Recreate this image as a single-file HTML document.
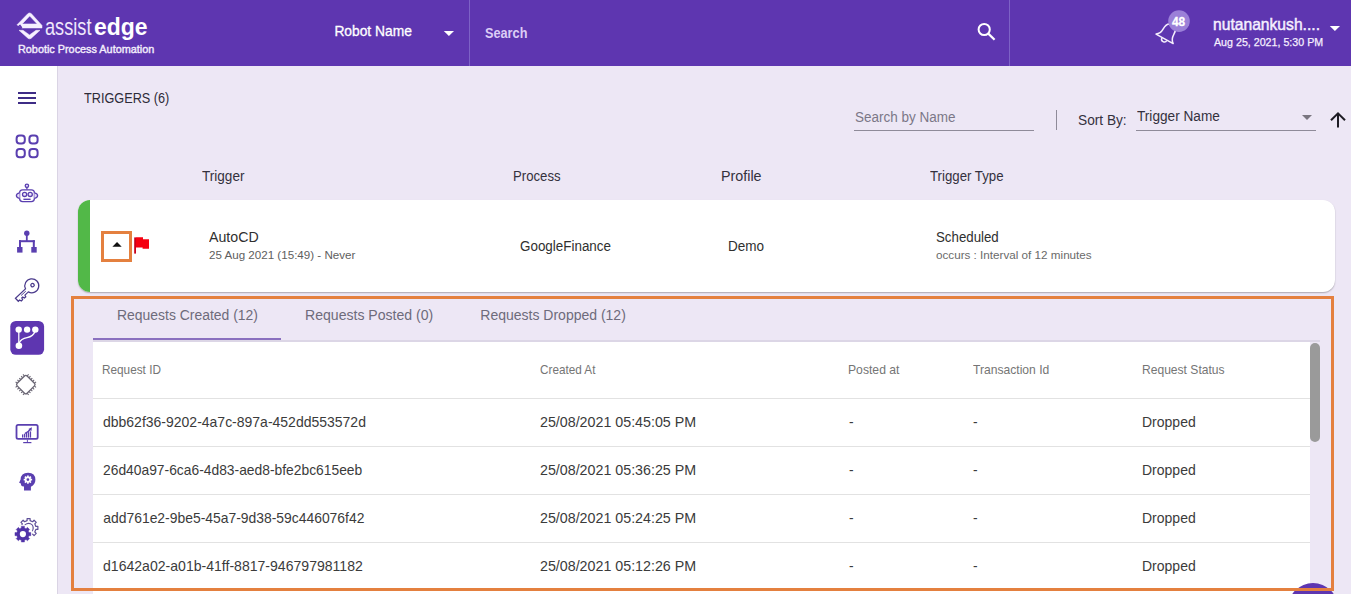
<!DOCTYPE html>
<html><head><meta charset="utf-8"><title>Triggers</title>
<style>
html,body{margin:0;padding:0;}
body{width:1351px;height:594px;overflow:hidden;position:relative;background:#ede7f5;font-family:"Liberation Sans",sans-serif;}
.a{position:absolute;}
.t{position:absolute;white-space:nowrap;transform-origin:0 0;}
svg{position:absolute;overflow:visible;}
</style></head><body>
<!-- header -->
<div class="a" style="left:0;top:0;width:1351px;height:66px;background:#5e36b0;"></div>
<div class="a" style="left:469px;top:0;width:1px;height:66px;background:#7d62c6;"></div>
<div class="a" style="left:1009px;top:0;width:1px;height:66px;background:#7d62c6;"></div>
<!-- logo icon -->
<svg style="left:0;top:0" width="60" height="60">
  <path fill-rule="evenodd" fill="#f6f0ff" stroke="#f6f0ff" stroke-width="0.5" stroke-linejoin="round" d="M16.9 24.9 L28 13.5 Q29.6 12.3 31.2 13.5 L42 25.4 L42 28 L21.6 28 L20.3 26.2 Z M22.2 23.9 L37.2 23.9 L29.7 16 Z"/>
  <path fill="#5e36b0" d="M18.6 25.2 L20.2 24.5 L22.4 27.6 L21 28.4 Z"/>
  <path fill="#f6f0ff" stroke="#f6f0ff" stroke-width="0.5" stroke-linejoin="round" d="M19 30.3 L28.2 38.4 Q29.6 39.3 31 38.4 L40 30.3 L36 30.3 L29.5 34.9 L23 30.3 Z"/>
</svg>
<!-- robot dropdown -->
<svg style="left:0;top:0" width="10" height="10"><path d="M443.8 31 L454 31 L448.9 36 Z" fill="#fff"/></svg>
<!-- search icon -->
<svg style="left:0;top:0" width="10" height="10">
  <circle cx="984.2" cy="29.5" r="5.6" fill="none" stroke="#fff" stroke-width="2"/>
  <path d="M988.3 33.6 L994.6 39.8" stroke="#fff" stroke-width="2.2" stroke-linecap="butt"/>
</svg>
<!-- bell -->
<svg style="left:0;top:0" width="10" height="10">
  <g transform="translate(1164.6,38.8) rotate(29)" fill="none" stroke="#f4eefc" stroke-width="1.5" stroke-linejoin="round">
    <path d="M-9.8 0 Q-6 -2.5 -6 -8 Q-6 -16 0 -16 Q6 -16 6 -8 Q6 -2.5 9.8 0 Z"/>
    <path d="M-2.8 0.4 A2.8 2.8 0 0 0 2.8 0.4"/>
  </g>
  <circle cx="1179" cy="21.1" r="10.8" fill="#9b80d8"/>
</svg>
<!-- user dropdown -->
<svg style="left:0;top:0" width="10" height="10"><path d="M1329.8 26 L1340 26 L1334.9 31 Z" fill="#fff"/></svg>

<!-- sidebar -->
<div class="a" style="left:0;top:66px;width:57px;height:528px;background:#ffffff;"></div>
<div class="a" style="left:57px;top:66px;width:1px;height:528px;background:#dad4e4;"></div>
<svg style="left:0;top:0" width="10" height="10">
  <!-- hamburger -->
  <g fill="#3e2c86"><rect x="18" y="92" width="18" height="2"/><rect x="18" y="97" width="18" height="2"/><rect x="18" y="102" width="18" height="2"/></g>
  <!-- grid -->
  <g fill="none" stroke="#5a3fb0" stroke-width="2">
    <rect x="16.6" y="135.4" width="8.2" height="8.2" rx="3"/>
    <rect x="29.4" y="135.4" width="8.2" height="8.2" rx="3"/>
    <rect x="16.6" y="149.1" width="8.2" height="8.2" rx="3"/>
    <rect x="29.4" y="149.1" width="8.2" height="8.2" rx="3"/>
  </g>
  <!-- robot -->
  <g fill="none" stroke="#5a3fb0" stroke-width="1.3">
    <circle cx="26.9" cy="185.8" r="1.7" fill="#e6def7"/>
    <path d="M26.9 187.5 V189.6"/>
    <rect x="19.6" y="189.8" width="14.8" height="11.8" rx="3"/>
    <path d="M19.6 192.8 Q16.4 193.3 16.4 195.6 Q16.4 197.9 19.6 198.4" fill="#e6def7"/>
    <path d="M34.4 192.8 Q37.6 193.3 37.6 195.6 Q37.6 197.9 34.4 198.4" fill="#e6def7"/>
    <circle cx="24.6" cy="194.4" r="2.1" fill="#ece6f8"/>
    <circle cx="30.2" cy="194.4" r="2.1" fill="#ece6f8"/>
    <path d="M23.4 199.3 H30.6" stroke-width="1.4"/>
  </g>
  <!-- hierarchy -->
  <g fill="#5a3fb0">
    <circle cx="26.8" cy="233.3" r="2.7"/>
    <rect x="25.9" y="233" width="1.8" height="8"/>
    <rect x="19" y="240.2" width="15.8" height="2"/>
    <rect x="19" y="240.2" width="2" height="7"/>
    <rect x="32.8" y="240.2" width="2" height="7"/>
    <rect x="17.1" y="247" width="5.4" height="5.6"/>
    <rect x="31.3" y="247" width="5.4" height="5.6"/>
  </g>
  <!-- key -->
  <g transform="translate(31.8,285.8) rotate(47)" fill="none" stroke="#4a3a8c" stroke-width="1.25" stroke-linejoin="miter">
    <path d="M-2.1 6.7 L-2.1 20.4 L2.1 20.4 L2.1 18.6 L3.9 18 L3.9 16.2 L2.1 15.6 L2.1 14.3 L3.9 13.7 L3.9 11.9 L2.1 11.3 L2.1 6.7 A7 7 0 1 0 -2.1 6.7 Z"/>
    <circle cx="0" cy="-1" r="1.7"/>
    <path d="M-0.2 8 V14.5" stroke-width="0.9"/>
  </g>
  <!-- active -->
  <rect x="10.3" y="321" width="33.8" height="33.8" rx="5.5" fill="#5e36b0"/>
  <g fill="#fff">
    <circle cx="18.7" cy="329.6" r="3.2"/><circle cx="27.1" cy="329.6" r="3.2"/><circle cx="35.3" cy="329.6" r="3.2"/>
    <circle cx="18.9" cy="345.8" r="3.3"/>
  </g>
  <g fill="none" stroke="#fff" stroke-width="1.25">
    <path d="M18.8 330 V345"/>
    <path d="M35.3 330.5 Q33.5 336.5 27 337.6 Q21 338.5 19.2 343"/>
  </g>
  <!-- chip -->
  <g transform="translate(25.8,384.6) rotate(45)">
    <rect x="-7" y="-7" width="14" height="14" rx="1.8" fill="none" stroke="#6a6674" stroke-width="1.3"/>
    <path d="M-5.2 -9.2 V-7.2 M-5.2 9.2 V7.2 M-9.2 -5.2 H-7.2 M9.2 -5.2 H7.2 M-2.6 -9.2 V-7.2 M-2.6 9.2 V7.2 M-9.2 -2.6 H-7.2 M9.2 -2.6 H7.2 M0 -9.2 V-7.2 M0 9.2 V7.2 M-9.2 0 H-7.2 M9.2 0 H7.2 M2.6 -9.2 V-7.2 M2.6 9.2 V7.2 M-9.2 2.6 H-7.2 M9.2 2.6 H7.2 M5.2 -9.2 V-7.2 M5.2 9.2 V7.2 M-9.2 5.2 H-7.2 M9.2 5.2 H7.2" stroke="#6a6674" stroke-width="1.1"/>
  </g>
  <!-- monitor -->
  <g>
    <rect x="16.5" y="424.9" width="21.2" height="13.9" rx="1.6" fill="none" stroke="#5a3fb0" stroke-width="1.8"/>
    <path d="M27.4 439.6 V442.2" stroke="#5a3fb0" stroke-width="0.9"/>
    <rect x="23.2" y="442" width="8.2" height="1.2" fill="#5a3fb0"/>
    <g fill="#5a3fb0"><rect x="22.00" y="434.40" width="1.3" height="3.20"/><rect x="23.95" y="433.65" width="1.3" height="3.95"/><rect x="25.90" y="432.90" width="1.3" height="4.70"/><rect x="27.85" y="432.15" width="1.3" height="5.45"/><rect x="29.80" y="431.40" width="1.3" height="6.20"/></g>
    <path d="M25 433.4 Q28.6 432.2 30.1 429.4" fill="none" stroke="#5a3fb0" stroke-width="1.5"/>
    <path d="M28.4 428.9 L31.9 427.2 L31.4 431 Z" fill="#5a3fb0"/>
  </g>
  <!-- head -->
  <g>
    <path d="M24 490.6 V486.6 Q21.8 486.6 21.1 485.3 L20.9 483.6 L19.1 482.8 L20.6 479.6 Q20.8 472.9 28.1 472.8 Q35.4 473 35.4 479.8 Q35.4 484.3 30.9 486.8 V490.6 Z" fill="#5a3fb0"/>
    <path fill="#fff" fill-rule="evenodd" d="M31.00 478.79 L32.12 478.76 L32.12 480.44 L31.00 480.41 L30.66 481.22 L31.48 481.99 L30.29 483.18 L29.52 482.36 L28.71 482.70 L28.74 483.82 L27.06 483.82 L27.09 482.70 L26.28 482.36 L25.51 483.18 L24.32 481.99 L25.14 481.22 L24.80 480.41 L23.68 480.44 L23.68 478.76 L24.80 478.79 L25.14 477.98 L24.32 477.21 L25.51 476.02 L26.28 476.84 L27.09 476.50 L27.06 475.38 L28.74 475.38 L28.71 476.50 L29.52 476.84 L30.29 476.02 L31.48 477.21 L30.66 477.98 Z M29.3 479.6 A1.4 1.4 0 1 0 26.5 479.6 A1.4 1.4 0 1 0 29.3 479.6 Z"/>
  </g>
  <!-- gears -->
  <g>
    <path d="M27.10 520.65 L27.06 518.63 L30.14 518.63 L30.10 520.65 L32.66 521.72 L34.07 520.25 L36.25 522.43 L34.78 523.84 L35.85 526.40 L37.87 526.36 L37.87 529.44 L35.85 529.40 L34.78 531.96 L36.25 533.37 L34.07 535.55 L32.66 534.08 L30.10 535.15 L30.14 537.17 L27.06 537.17 L27.10 535.15 L24.54 534.08 L23.13 535.55 L20.95 533.37 L22.42 531.96 L21.35 529.40 L19.33 529.44 L19.33 526.36 L21.35 526.40 L22.42 523.84 L20.95 522.43 L23.13 520.25 L24.54 521.72 Z" fill="#fff" stroke="#5e4f98" stroke-width="1.2" stroke-linejoin="round"/>
    <circle cx="28.6" cy="527.9" r="4.6" fill="none" stroke="#5e4f98" stroke-width="1.2"/>
    <circle cx="22.9" cy="534.1" r="9.4" fill="#fff"/>
    <path d="M29.00 532.51 L30.84 532.52 L30.84 535.68 L29.00 535.69 L28.34 537.29 L29.63 538.60 L27.40 540.83 L26.09 539.54 L24.49 540.20 L24.48 542.04 L21.32 542.04 L21.31 540.20 L19.71 539.54 L18.40 540.83 L16.17 538.60 L17.46 537.29 L16.80 535.69 L14.96 535.68 L14.96 532.52 L16.80 532.51 L17.46 530.91 L16.17 529.60 L18.40 527.37 L19.71 528.66 L21.31 528.00 L21.32 526.16 L24.48 526.16 L24.49 528.00 L26.09 528.66 L27.40 527.37 L29.63 529.60 L28.34 530.91 Z" fill="#5032a8" stroke="#5032a8" stroke-width="0.4" stroke-linejoin="round"/>
    <circle cx="22.9" cy="534.1" r="3.1" fill="#fff"/>
  </g>
</svg>

<!-- toolbar -->
<div class="a" style="left:854px;top:130px;width:180px;height:1px;background:#8f8b99;"></div>
<div class="a" style="left:1056px;top:110px;width:1px;height:20px;background:#8f8b99;"></div>
<div class="a" style="left:1136px;top:130px;width:180px;height:1px;background:#8f8b99;"></div>
<svg style="left:0;top:0" width="10" height="10">
  <path d="M1302 115 L1312 115 L1307 120 Z" fill="#7a7680"/>
  <path d="M1338 127.5 V113.8 M1331 120.3 L1338 113.3 L1345 120.3" fill="none" stroke="#1e1c24" stroke-width="2"/>
</svg>

<!-- card -->
<div class="a" style="left:78px;top:200px;width:1257px;height:92px;background:#fff;border-radius:12px;box-shadow:0 1px 1.5px rgba(0,0,0,0.28);overflow:hidden;">
  <div class="a" style="left:0;top:0;width:12px;height:92px;background:#52b848;"></div>
</div>
<div class="a" style="left:101px;top:231px;width:25px;height:25px;border:3px solid #e4803f;"></div>
<svg style="left:0;top:0" width="10" height="10">
  <path d="M112.4 246.8 L121.7 246.8 L117.05 242 Z" fill="#111"/>
  <rect x="134.2" y="237.4" width="1.8" height="16.2" fill="#c8001a"/>
  <path d="M136 237.3 H143 V239.3 H149 V248.7 H142.6 V247.6 H136 Z" fill="#f50010"/>
</svg>

<!-- requests panel -->
<div class="a" style="left:93px;top:340px;width:1227px;height:2px;background:#dcd6e6;"></div>
<div class="a" style="left:93px;top:338px;width:188px;height:2px;background:#8a70bf;"></div>
<div class="a" style="left:93px;top:342px;width:1217px;height:252px;background:#fff;"></div>
<div class="a" style="left:93px;top:398px;width:1217px;height:1px;background:#e2e2e2;"></div>
<div class="a" style="left:93px;top:446px;width:1217px;height:1px;background:#e2e2e2;"></div>
<div class="a" style="left:93px;top:494px;width:1217px;height:1px;background:#e2e2e2;"></div>
<div class="a" style="left:93px;top:542px;width:1217px;height:1px;background:#e2e2e2;"></div>
<div class="a" style="left:1310px;top:343px;width:10px;height:99px;background:#9a9a9a;border-radius:5px;"></div>
<div class="a" style="left:1288px;top:583px;width:50px;height:50px;background:#5e36b0;border-radius:50%;"></div>
<div class="a" style="left:71px;top:296px;width:1257px;height:289px;border:3px solid #e4803f;"></div>

<div class="t" style="left:45.23px;top:16px;font-size:23.6px;line-height:23.6px;font-weight:400;color:#efe8fb;transform:scaleX(0.7698);">assist</div>
<div class="t" style="left:94.00px;top:15px;font-size:24.4px;line-height:24.4px;font-weight:700;color:#ffffff;transform:scaleX(0.9403);">edge</div>
<div class="t" style="left:17.60px;top:44px;font-size:11.4px;line-height:11.4px;font-weight:400;color:#f4eefc;transform:scaleX(0.9520);-webkit-text-stroke:0.4px #f4eefc;">Robotic Process Automation</div>
<div class="t" style="left:334.40px;top:25px;font-size:13.8px;line-height:13.8px;font-weight:400;color:#ffffff;-webkit-text-stroke:0.3px #fff;">Robot Name</div>
<div class="t" style="left:485.40px;top:27px;font-size:13.8px;line-height:13.8px;font-weight:700;color:#dccdf6;transform:scaleX(0.9212);">Search</div>
<div class="t" style="left:1212.85px;top:16px;font-size:16.4px;line-height:16.4px;font-weight:400;color:#f6f0ff;transform:scaleX(0.9545);-webkit-text-stroke:0.45px #f6f0ff;">nutanankush....</div>
<div class="t" style="left:1213.50px;top:37px;font-size:11px;line-height:11px;font-weight:400;color:#f6f0ff;transform:scaleX(0.9701);-webkit-text-stroke:0.25px #f6f0ff;">Aug 25, 2021, 5:30 PM</div>
<div class="t" style="left:1172.30px;top:16px;font-size:12.4px;line-height:12.4px;font-weight:700;color:#ffffff;transform:scaleX(0.9574);-webkit-text-stroke:0.3px #fff;">48</div>
<div class="t" style="left:83.50px;top:91px;font-size:14px;line-height:14px;font-weight:400;color:#2d2b38;transform:scaleX(0.9063);">TRIGGERS (6)</div>
<div class="t" style="left:854.60px;top:111px;font-size:13.8px;line-height:13.8px;font-weight:400;color:#7b7787;transform:scaleX(0.9779);">Search by Name</div>
<div class="t" style="left:1077.90px;top:113px;font-size:14px;line-height:14px;font-weight:400;color:#34313d;transform:scaleX(0.9774);">Sort By:</div>
<div class="t" style="left:1137.00px;top:110px;font-size:13.8px;line-height:13.8px;font-weight:400;color:#34313d;transform:scaleX(0.9887);">Trigger Name</div>
<div class="t" style="left:202.20px;top:169px;font-size:14px;line-height:14px;font-weight:400;color:#34313d;transform:scaleX(0.9691);">Trigger</div>
<div class="t" style="left:513.26px;top:169px;font-size:14px;line-height:14px;font-weight:400;color:#34313d;transform:scaleX(0.9400);">Process</div>
<div class="t" style="left:720.98px;top:169px;font-size:14px;line-height:14px;font-weight:400;color:#34313d;transform:scaleX(1.0207);">Profile</div>
<div class="t" style="left:930.00px;top:169px;font-size:14px;line-height:14px;font-weight:400;color:#34313d;transform:scaleX(0.9453);">Trigger Type</div>
<div class="t" style="left:209.40px;top:230px;font-size:14px;line-height:14px;font-weight:400;color:#2f2f2f;transform:scaleX(1.0121);">AutoCD</div>
<div class="t" style="left:209.40px;top:250px;font-size:11.4px;line-height:11.4px;font-weight:400;color:#5e5e5e;transform:scaleX(1.0182);">25 Aug 2021 (15:49) - Never</div>
<div class="t" style="left:520.40px;top:239px;font-size:14px;line-height:14px;font-weight:400;color:#2f2f2f;transform:scaleX(0.9583);">GoogleFinance</div>
<div class="t" style="left:727.63px;top:239px;font-size:14px;line-height:14px;font-weight:400;color:#2f2f2f;transform:scaleX(0.9656);">Demo</div>
<div class="t" style="left:935.70px;top:230px;font-size:14px;line-height:14px;font-weight:400;color:#2f2f2f;transform:scaleX(0.9483);">Scheduled</div>
<div class="t" style="left:935.70px;top:250px;font-size:11.4px;line-height:11.4px;font-weight:400;color:#6a6a6a;transform:scaleX(1.0246);">occurs : Interval of 12 minutes</div>
<div class="t" style="left:116.60px;top:308px;font-size:14px;line-height:14px;font-weight:400;color:#6e6b7b;transform:scaleX(0.9952);">Requests Created (12)</div>
<div class="t" style="left:304.99px;top:308px;font-size:14px;line-height:14px;font-weight:400;color:#6e6b7b;transform:scaleX(1.0051);">Requests Posted (0)</div>
<div class="t" style="left:480.30px;top:308px;font-size:14px;line-height:14px;font-weight:400;color:#6e6b7b;">Requests Dropped (12)</div>
<div class="t" style="left:102.35px;top:364px;font-size:12.4px;line-height:12.4px;font-weight:400;color:#757575;transform:scaleX(0.9503);">Request ID</div>
<div class="t" style="left:540.40px;top:364px;font-size:12.4px;line-height:12.4px;font-weight:400;color:#757575;transform:scaleX(0.9467);">Created At</div>
<div class="t" style="left:847.92px;top:364px;font-size:12.4px;line-height:12.4px;font-weight:400;color:#757575;transform:scaleX(0.9825);">Posted at</div>
<div class="t" style="left:973.20px;top:364px;font-size:12.4px;line-height:12.4px;font-weight:400;color:#757575;transform:scaleX(0.9775);">Transaction Id</div>
<div class="t" style="left:1141.63px;top:364px;font-size:12.4px;line-height:12.4px;font-weight:400;color:#757575;transform:scaleX(0.9746);">Request Status</div>
<div class="t" style="left:103.30px;top:416px;font-size:13.9px;line-height:13.9px;font-weight:400;color:#3b3b3b;transform:scaleX(1.0071);">dbb62f36-9202-4a7c-897a-452dd553572d</div>
<div class="t" style="left:540.40px;top:416px;font-size:13.9px;line-height:13.9px;font-weight:400;color:#3b3b3b;transform:scaleX(1.0259);">25/08/2021 05:45:05 PM</div>
<div class="t" style="left:849.00px;top:416px;font-size:13.8px;line-height:13.8px;font-weight:400;color:#3b3b3b;">-</div>
<div class="t" style="left:973.00px;top:416px;font-size:13.8px;line-height:13.8px;font-weight:400;color:#3b3b3b;">-</div>
<div class="t" style="left:1141.59px;top:416px;font-size:13.8px;line-height:13.8px;font-weight:400;color:#3b3b3b;transform:scaleX(1.0146);">Dropped</div>
<div class="t" style="left:103.30px;top:464px;font-size:13.9px;line-height:13.9px;font-weight:400;color:#3b3b3b;transform:scaleX(0.9959);">26d40a97-6ca6-4d83-aed8-bfe2bc615eeb</div>
<div class="t" style="left:540.40px;top:464px;font-size:13.9px;line-height:13.9px;font-weight:400;color:#3b3b3b;transform:scaleX(1.0259);">25/08/2021 05:36:25 PM</div>
<div class="t" style="left:849.00px;top:464px;font-size:13.8px;line-height:13.8px;font-weight:400;color:#3b3b3b;">-</div>
<div class="t" style="left:973.00px;top:464px;font-size:13.8px;line-height:13.8px;font-weight:400;color:#3b3b3b;">-</div>
<div class="t" style="left:1141.59px;top:464px;font-size:13.8px;line-height:13.8px;font-weight:400;color:#3b3b3b;transform:scaleX(1.0146);">Dropped</div>
<div class="t" style="left:103.30px;top:512px;font-size:13.9px;line-height:13.9px;font-weight:400;color:#3b3b3b;">add761e2-9be5-45a7-9d38-59c446076f42</div>
<div class="t" style="left:540.40px;top:512px;font-size:13.9px;line-height:13.9px;font-weight:400;color:#3b3b3b;transform:scaleX(1.0259);">25/08/2021 05:24:25 PM</div>
<div class="t" style="left:849.00px;top:512px;font-size:13.8px;line-height:13.8px;font-weight:400;color:#3b3b3b;">-</div>
<div class="t" style="left:973.00px;top:512px;font-size:13.8px;line-height:13.8px;font-weight:400;color:#3b3b3b;">-</div>
<div class="t" style="left:1141.59px;top:512px;font-size:13.8px;line-height:13.8px;font-weight:400;color:#3b3b3b;transform:scaleX(1.0146);">Dropped</div>
<div class="t" style="left:103.30px;top:560px;font-size:13.9px;line-height:13.9px;font-weight:400;color:#3b3b3b;transform:scaleX(1.0122);">d1642a02-a01b-41ff-8817-946797981182</div>
<div class="t" style="left:540.40px;top:560px;font-size:13.9px;line-height:13.9px;font-weight:400;color:#3b3b3b;transform:scaleX(1.0259);">25/08/2021 05:12:26 PM</div>
<div class="t" style="left:849.00px;top:560px;font-size:13.8px;line-height:13.8px;font-weight:400;color:#3b3b3b;">-</div>
<div class="t" style="left:973.00px;top:560px;font-size:13.8px;line-height:13.8px;font-weight:400;color:#3b3b3b;">-</div>
<div class="t" style="left:1141.59px;top:560px;font-size:13.8px;line-height:13.8px;font-weight:400;color:#3b3b3b;transform:scaleX(1.0146);">Dropped</div>
</body></html>
